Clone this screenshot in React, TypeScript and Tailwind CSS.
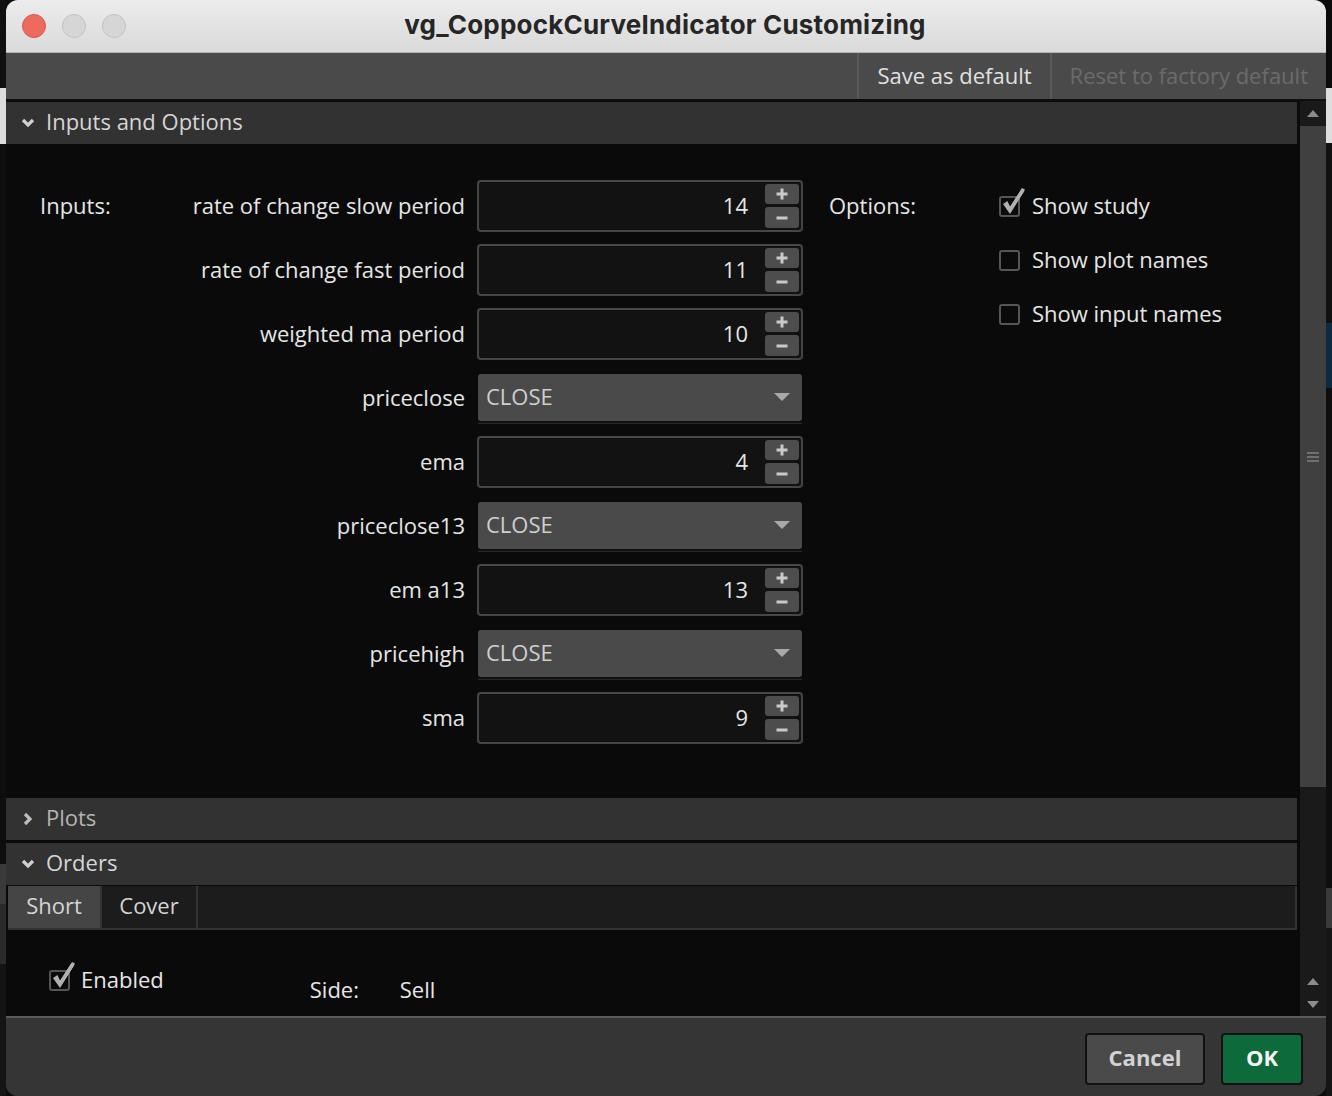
import React from "react";

const font = { fontFamily: '"Open Sans", "Noto Sans", sans-serif' };

function Spinner({ value }: { value: string }) {
  return (
    <div className="w-[326px] h-[52px] rounded-[4px] border-2 border-[#464646] bg-[#121212] flex items-center">
      <div className="flex-1 text-right pr-[17px] pb-[2px] text-[22px] text-[#e6e6e6]">{value}</div>
      <div className="flex flex-col gap-[3px] mr-[2px]">
        <div className="w-[34px] h-[20px] rounded-[3px] bg-[#4d4d4d] flex items-center justify-center">
          <svg width="12" height="12" viewBox="0 0 12 12">
            <rect x="4.5" y="0.5" width="3" height="11" fill="#c9c9c9" />
            <rect x="0.5" y="4.5" width="11" height="3" fill="#c9c9c9" />
          </svg>
        </div>
        <div className="w-[34px] h-[21px] rounded-[3px] bg-[#4d4d4d] flex items-center justify-center">
          <svg width="12" height="12" viewBox="0 0 12 12">
            <rect x="0.5" y="4.5" width="11" height="3" fill="#c9c9c9" />
          </svg>
        </div>
      </div>
    </div>
  );
}

function Dropdown({ value }: { value: string }) {
  return (
    <div className="w-[326px] h-[52px] flex flex-col pt-[2px]">
      <div className="ml-[1px] w-[324px] h-[47px] rounded-[3px] bg-[#4a4a4a] flex items-center px-[8px]">
        <span className="flex-1 pb-[2px] text-[22px] text-[#cfcfcf]">{value}</span>
        <svg width="16" height="9" viewBox="0 0 16 9" className="mr-[4px]">
          <polygon points="0,0 16,0 8,8" fill="#a9a9a9" />
        </svg>
      </div>
      <div className="ml-[1px] w-[324px] h-[2px] bg-[#101010]" />
      <div className="ml-[1px] w-[324px] h-[1px] bg-[#262626]" />
    </div>
  );
}

function Checkbox({ checked }: { checked: boolean }) {
  return (
    <div className="relative w-[21px] h-[21px] rounded-[3px] border-2 border-[#555555]">
      {checked && (
        <svg width="26" height="30" viewBox="0 0 26 30" className="absolute left-[0px] top-[-11px]">
          <path d="M2 17 L9 27 L24 2.5 L21 1 L9 20 L6.5 14 Z" fill="#b0b0b0" />
          <path d="M5 16 L9 23 L22 3" stroke="#b0b0b0" strokeWidth="3.5" fill="none" strokeLinejoin="round" />
        </svg>
      )}
    </div>
  );
}

function SectionHeader({ title, open, dim }: { title: string; open: boolean; dim?: boolean }) {
  return (
    <div className="h-[42px] bg-[#323232] flex items-center pl-[15px] mr-[3px]">
      {open ? (
        <svg width="14" height="10" viewBox="0 0 14 10" className="mr-[11px]">
          <path d="M2 2 L7 7 L12 2" stroke="#d0d0d0" strokeWidth="3.2" fill="none" />
        </svg>
      ) : (
        <svg width="14" height="14" viewBox="0 0 14 14" className="mr-[11px]">
          <path d="M4 2 L9 7 L4 12" stroke="#bdbdbd" strokeWidth="3.2" fill="none" />
        </svg>
      )}
      <span className={"pb-[3px] text-[22px] " + (dim ? "text-[#b4b4b4]" : "text-[#d6d6d6]")}>{title}</span>
    </div>
  );
}

const rows: { label: string; kind: "spin" | "drop"; value: string }[] = [
  { label: "rate of change slow period", kind: "spin", value: "14" },
  { label: "rate of change fast period", kind: "spin", value: "11" },
  { label: "weighted ma period", kind: "spin", value: "10" },
  { label: "priceclose", kind: "drop", value: "CLOSE" },
  { label: "ema", kind: "spin", value: "4" },
  { label: "priceclose13", kind: "drop", value: "CLOSE" },
  { label: "em a13", kind: "spin", value: "13" },
  { label: "pricehigh", kind: "drop", value: "CLOSE" },
  { label: "sma", kind: "spin", value: "9" },
];

export default function App() {
  return (
    <div className="w-[1332px] h-[1096px] bg-[#0c0c0c] flex overflow-hidden" style={font}>
      {/* left sliver of background app */}
      <div className="w-[6px] h-full flex flex-col">
        <div className="h-[88px] bg-[#101010]" />
        <div className="h-[56px] bg-[#dcdcdc]" />
        <div className="h-[720px] bg-[#0e0e0e]" />
        <div className="h-[40px] bg-[#3a3a3a]" />
        <div className="h-[60px] bg-[#2a2a2a]" />
        <div className="flex-1 bg-[#141414]" />
      </div>

      {/* window */}
      <div className="w-[1320px] h-full flex flex-col rounded-t-[12px] rounded-b-[12px] overflow-hidden bg-[#353535]">
        {/* title bar */}
        <div className="h-[53px] shrink-0 bg-gradient-to-b from-[#ececec] to-[#dadada] border-b border-[#b5b5b5] flex items-center relative">
          <div className="flex gap-[16px] pl-[16px]">
            <div className="w-[24px] h-[24px] rounded-full bg-[#ed6a5e] border border-[#d8574c]" />
            <div className="w-[24px] h-[24px] rounded-full bg-[#d6d6d6] border border-[#c2c2c2]" />
            <div className="w-[24px] h-[24px] rounded-full bg-[#d6d6d6] border border-[#c2c2c2]" />
          </div>
          <div
            className="flex-1 text-center text-[26px] font-bold text-[#262626] pr-[122px] pb-[3px] tracking-[0.2px]"
            style={{ fontFamily: 'Inter, "Liberation Sans", sans-serif' }}
          >
            vg_CoppockCurveIndicator Customizing
          </div>
        </div>

        {/* toolbar */}
        <div className="h-[48px] shrink-0 bg-[#4a4a4a] border-b-2 border-[#0e0e0e] flex justify-end">
          <div className="h-full flex items-center border-l-2 border-[#5a5a5a] px-[18px] pb-[2px] text-[22px] text-[#e0e0e0]">
            Save as default
          </div>
          <div className="h-full flex items-center border-l-2 border-[#5a5a5a] px-[18px] pb-[2px] text-[22px] text-[#6b6b6b]">
            Reset to factory default
          </div>
        </div>

        {/* content + scrollbar */}
        <div className="h-[915px] shrink-0 flex bg-[#0a0a0a]">
          <div className="flex-1 flex flex-col pt-[1px]">
            <SectionHeader title="Inputs and Options" open />
            <div className="h-[653px] flex pt-[36px] pl-[34px]">
              <div className="w-[150px] h-[52px] pb-[2px] flex items-center text-[22px] text-[#e6e6e6]">Inputs:</div>
              <div className="flex flex-col gap-[12px]">
                {rows.map((r) => (
                  <div key={r.label} className="flex items-center gap-[12px]">
                    <div className="w-[275px] pb-[2px] text-right text-[22px] text-[#e6e6e6]">{r.label}</div>
                    {r.kind === "spin" ? <Spinner value={r.value} /> : <Dropdown value={r.value} />}
                  </div>
                ))}
              </div>
              <div className="w-[170px] h-[52px] ml-[26px] pb-[2px] flex items-center text-[22px] text-[#e6e6e6]">Options:</div>
              <div className="flex flex-col gap-[30px] pt-[14px]">
                {[
                  { t: "Show study", c: true },
                  { t: "Show plot names", c: false },
                  { t: "Show input names", c: false },
                ].map((o) => (
                  <div key={o.t} className="flex items-center gap-[12px] h-[24px]">
                    <Checkbox checked={o.c} />
                    <span className="pb-[2px] text-[22px] text-[#e6e6e6]">{o.t}</span>
                  </div>
                ))}
              </div>
            </div>
            <div className="h-[1px]" />
            <SectionHeader title="Plots" open={false} dim />
            <div className="h-[3px]" />
            <SectionHeader title="Orders" open />
            {/* tabs */}
            <div className="h-[44px] mt-[1px] ml-[2px] mr-[3px] flex bg-[#1c1c1c] border-b-2 border-r-2 border-[#333333]">
              <div className="w-[92px] h-full bg-[#454545] pb-[3px] flex items-center justify-center text-[22px] text-[#d4d4d4]">
                Short
              </div>
              <div className="w-[98px] h-full bg-[#1c1c1c] border-l-2 border-r-2 border-[#333333] pb-[3px] flex items-center justify-center text-[22px] text-[#d4d4d4]">
                Cover
              </div>
            </div>
            <div className="flex-1 relative pl-[43px] flex">
              <div className="flex items-center gap-[11px] mt-[38px] h-[24px]">
                <Checkbox checked />
                <span className="pb-[2px] text-[22px] text-[#e6e6e6]">Enabled</span>
              </div>
              <div className="ml-[146px] mt-[46px] h-[26px] flex items-center text-[22px] text-[#e6e6e6]">
                <span className="w-[90px]">Side:</span>
                <span>Sell</span>
              </div>
            </div>
          </div>

          {/* scrollbar */}
          <div className="w-[26px] flex flex-col bg-[#1a1a1a]">
            <div className="h-[25px] flex items-center justify-center">
              <svg width="12" height="7" viewBox="0 0 12 7">
                <polygon points="0,7 12,7 6,0" fill="#8c8c8c" />
              </svg>
            </div>
            <div className="h-[661px] bg-[#404040] flex items-center justify-center">
              <svg width="12" height="10" viewBox="0 0 12 10">
                <rect x="0" y="0" width="12" height="2" fill="#707070" />
                <rect x="0" y="4" width="12" height="2" fill="#707070" />
                <rect x="0" y="8" width="12" height="2" fill="#707070" />
              </svg>
            </div>
            <div className="flex-1 flex flex-col items-center justify-end pb-[8px] gap-[16px]">
              <svg width="12" height="7" viewBox="0 0 12 7">
                <polygon points="0,7 12,7 6,0" fill="#8c8c8c" />
              </svg>
              <svg width="12" height="7" viewBox="0 0 12 7">
                <polygon points="0,0 12,0 6,7" fill="#8c8c8c" />
              </svg>
            </div>
          </div>
        </div>

        {/* bottom bar */}
        <div className="flex-1 border-t-2 border-[#5a5a5a] bg-[#353535] flex items-start justify-end gap-[16px] pt-[15px] pr-[23px]">
          <div className="w-[120px] h-[52px] rounded-[4px] border-2 border-[#121212] bg-[#4a4a4a] pb-[3px] flex items-center justify-center text-[22px] font-bold text-[#d2d2d2]">
            Cancel
          </div>
          <div className="w-[82px] h-[52px] rounded-[4px] border-2 border-[#121212] bg-[#0d6a3a] pb-[3px] flex items-center justify-center text-[22px] font-bold text-[#f4f4f4]">
            OK
          </div>
        </div>
      </div>

      {/* right sliver of background app */}
      <div className="w-[6px] h-full flex flex-col">
        <div className="h-[88px] bg-[#0c0c0c]" />
        <div className="h-[55px] bg-[#dedede]" />
        <div className="h-[180px] bg-[#111111]" />
        <div className="h-[65px] bg-[#0d2a40]" />
        <div className="h-[500px] bg-[#0e0e0e]" />
        <div className="h-[40px] bg-[#3a3a3a]" />
        <div className="flex-1 bg-[#151515]" />
      </div>
    </div>
  );
}
